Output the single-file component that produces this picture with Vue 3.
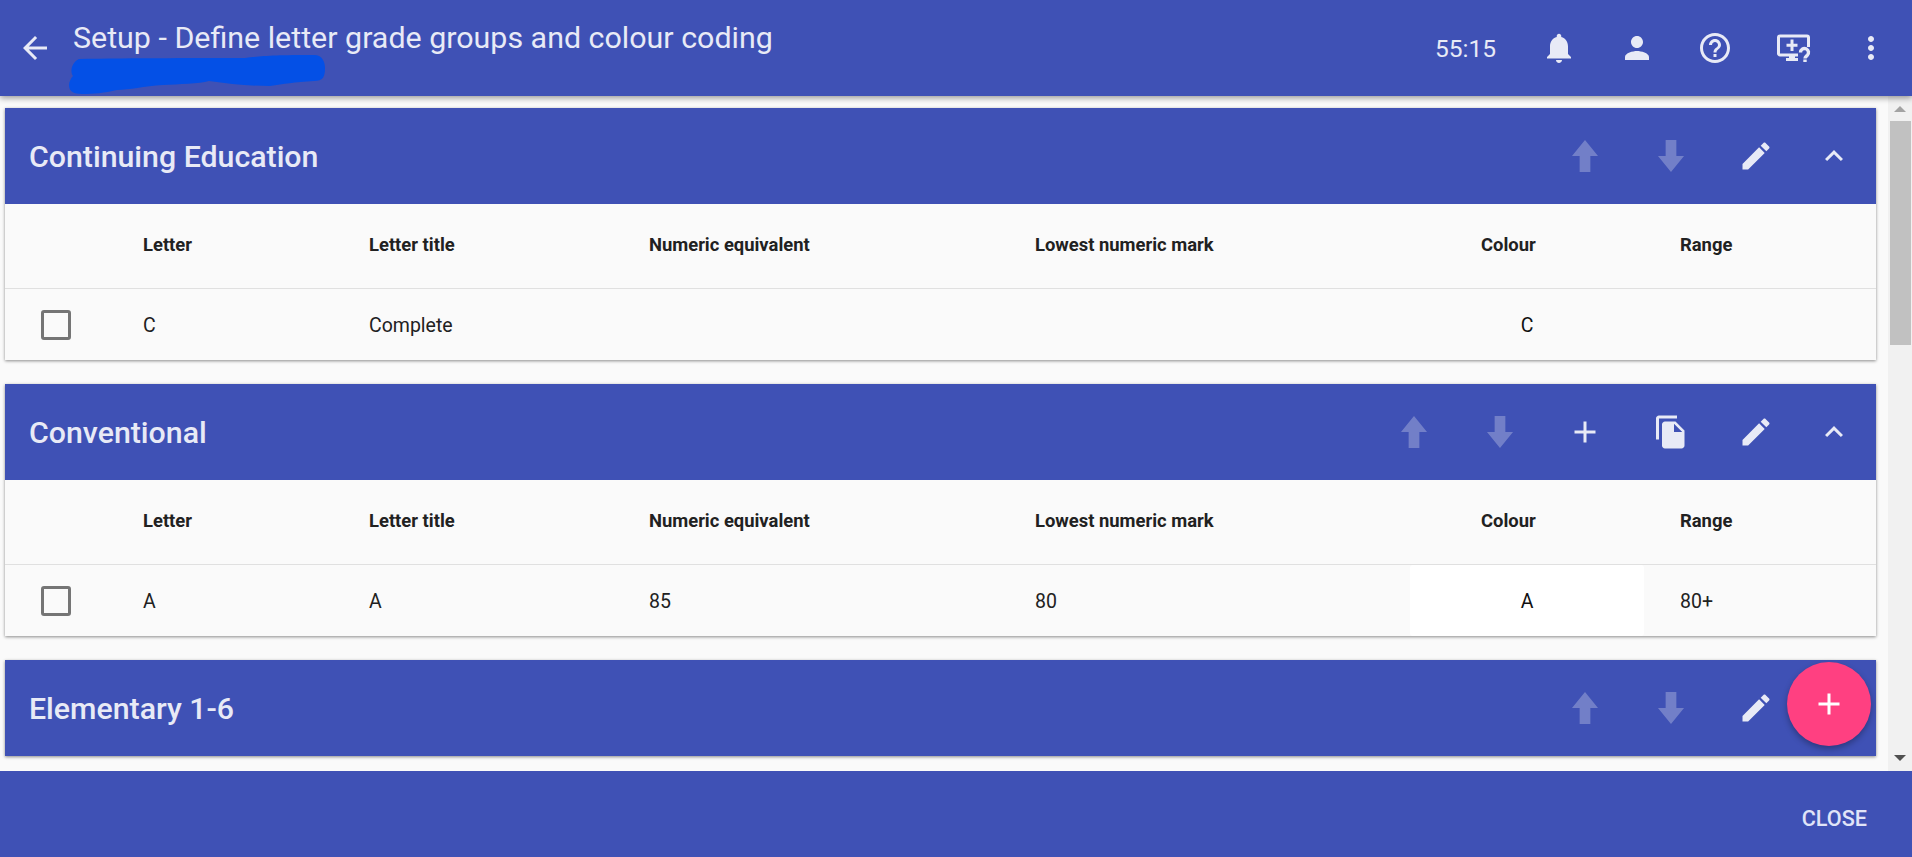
<script setup>
const groups = [
  {
    title: 'Continuing Education',
    actions: ['up', 'down', 'edit', 'less'],
    rows: [{ letter: 'C', name: 'Complete', numeric: '', lowest: '', colour: 'C', bg: '#fafafa', range: '' }],
  },
  {
    title: 'Conventional',
    actions: ['up', 'down', 'add', 'copy', 'edit', 'less'],
    rows: [{ letter: 'A', name: 'A', numeric: '85', lowest: '80', colour: 'A', bg: '#ffffff', range: '80+' }],
  },
  {
    title: 'Elementary 1-6',
    actions: ['up', 'down', 'edit', 'less'],
    rows: [],
  },
]

const icons = {
  add: 'M19 13h-6v6h-2v-6H5v-2h6V5h2v6h6v2z',
  edit: 'M3 17.25V21h3.75L17.81 9.94l-3.75-3.75L3 17.25zM20.71 7.04c.39-.39.39-1.02 0-1.41l-2.34-2.34c-.39-.39-1.02-.39-1.41 0l-1.83 1.83 3.75 3.75 1.83-1.83z',
  less: 'M12 8l-6 6 1.41 1.41L12 10.83l4.59 4.58L18 14z',
  copy: 'M16 1H4c-1.1 0-2 .9-2 2v14h2V3h12V1zm-1 4l6 6v10c0 1.1-.9 2-2 2H7.99C6.89 23 6 22.1 6 21l.01-14c0-1.1.89-2 1.99-2h7zm-1 7h5.5L14 6.5V12z',
  up: 'M12 1.330l8.670 10.670h-5.100V22.670H8.430V12H3.330z',
  down: 'M12 22.670L3.330 12h5.100V1.330h7.140V12h5.100z',
  back: 'M20 11H7.83l5.59-5.59L12 4l-8 8 8 8 1.41-1.41L7.83 13H20v-2z',
  bell: 'M12 22c1.1 0 2-.9 2-2h-4c0 1.1.89 2 2 2zm6-6v-5c0-3.07-1.64-5.64-4.5-6.32V4c0-.83-.67-1.5-1.5-1.5s-1.5.67-1.5 1.5v.68C7.63 5.36 6 7.92 6 11v5l-2 2v1h16v-1l-2-2z',
  person: 'M12 12c2.21 0 4-1.79 4-4s-1.79-4-4-4-4 1.79-4 4 1.79 4 4 4zm0 2c-2.67 0-8 1.34-8 4v2h16v-2c0-2.66-5.33-4-8-4z',
  help: 'M11 18h2v-2h-2v2zm1-16C6.48 2 2 6.48 2 12s4.48 10 10 10 10-4.48 10-10S17.52 2 12 2zm0 18c-4.41 0-8-3.59-8-8s3.59-8 8-8 8 3.59 8 8-3.59 8-8 8zm0-14c-2.21 0-4 1.79-4 4h2c0-1.1.9-2 2-2s2 .9 2 2c0 2-3 1.75-3 5h2c0-2.25 3-2.5 3-5 0-2.21-1.79-4-4-4z',
  more: 'M12 8c1.1 0 2-.9 2-2s-.9-2-2-2-2 .9-2 2 .9 2 2 2zm0 2c-1.1 0-2 .9-2 2s.9 2 2 2 2-.9 2-2-.9-2-2-2zm0 6c-1.1 0-2 .9-2 2s.9 2 2 2 2-.9 2-2-.9-2-2-2z',
}
</script>

<template>
  <div class="page">
    <header class="topbar">
      <svg class="icon back" viewBox="0 0 24 24"><path :d="icons.back" /></svg>
      <div class="heading">
        <div class="title">Setup - Define letter grade groups and colour coding</div>
        <svg class="scribble" viewBox="0 0 256 40">
          <path d="M10 4C60 3 140 3 176 3C190 1 205 0 245 0C254 0 256 8 256 13C256 22 254 26 245 26C225 27 215 29 201 31C180 31 160 29 140 26C130 29 110 29 94 30C75 31 60 35 48 35C35 38 25 39 13 39C4 39 0 36 0 30C0 27 2 23 4 21C1 17 2 8 10 4Z" />
        </svg>
      </div>
      <span class="timer">55:15</span>
      <svg class="icon tool" viewBox="0 0 24 24"><path :d="icons.bell" /></svg>
      <svg class="icon tool" viewBox="0 0 24 24"><path :d="icons.person" /></svg>
      <svg class="icon tool" viewBox="0 0 24 24"><path :d="icons.help" /></svg>
      <svg class="icon tool" viewBox="0 0 36 36">
        <path d="M23 25H5a1.500 1.500 0 0 1-1.500-1.500V7.500A1.500 1.500 0 0 1 5 6h27a1.500 1.500 0 0 1 1.500 1.500V17" class="line" />
        <path d="M17 9.500v11.500M11.500 15.200h11" class="line" />
        <path d="M14 25h6v3h3v3h-12v-3h3z" />
        <path d="M25.500 22.500a4 4 0 1 1 6.800 2.800c-1.300 1.200-2.300 1.800-2.300 3.200M30 29.500v2.500" class="line bold" />
      </svg>
      <svg class="icon tool last" viewBox="0 0 24 24"><path :d="icons.more" /></svg>
    </header>

    <div class="middle">
      <main class="list">
        <section v-for="group in groups" :key="group.title" class="card">
          <div class="card-head">
            <h2>{{ group.title }}</h2>
            <span
              v-for="action in group.actions"
              :key="action"
              class="action"
              :class="{ off: action === 'up' || action === 'down', end: action === 'less' }"
            >
              <svg class="icon" viewBox="0 0 24 24"><path :d="icons[action]" /></svg>
            </span>
          </div>
          <template v-if="group.rows.length">
            <div class="row head">
              <span></span>
              <span>Letter</span>
              <span>Letter title</span>
              <span>Numeric equivalent</span>
              <span>Lowest numeric mark</span>
              <span class="colour-head">Colour</span>
              <span class="range">Range</span>
            </div>
            <div v-for="row in group.rows" :key="row.letter" class="row data">
              <span class="check"><i></i></span>
              <span class="cell">{{ row.letter }}</span>
              <span class="cell">{{ row.name }}</span>
              <span class="cell">{{ row.numeric }}</span>
              <span class="cell">{{ row.lowest }}</span>
              <span class="colour" :style="{ background: row.bg }">{{ row.colour }}</span>
              <span class="cell range">{{ row.range }}</span>
            </div>
          </template>
        </section>
      </main>
      <div class="scrollbar">
        <i class="arrow top"></i>
        <b></b>
        <i class="arrow bottom"></i>
      </div>
      <button class="fab">
        <svg class="icon" viewBox="0 0 24 24"><path :d="icons.add" /></svg>
      </button>
    </div>

    <footer class="bottombar">
      <span>CLOSE</span>
    </footer>
  </div>
</template>

<style>
html, body {
  margin: 0;
  overflow: hidden;
}
</style>

<style scoped>
.page {
  width: 1912px;
  height: 857px;
  display: flex;
  flex-direction: column;
  background: #fafafa;
  font-family: Roboto, sans-serif;
  color: #212121;
}

.icon {
  display: block;
  width: 36px;
  height: 36px;
  fill: currentColor;
  flex: none;
}

.topbar {
  height: 96px;
  flex: none;
  display: flex;
  align-items: center;
  padding-left: 17px;
  background: #3f51b5;
  color: #e8eaf6;
  box-shadow: 0 2px 6px rgba(0, 0, 0, 0.4);
  position: relative;
  z-index: 2;
}

.heading {
  margin-left: 20px;
  flex: 1;
  height: 96px;
  display: flex;
  flex-direction: column;
}

.title {
  font-size: 30.4px;
  line-height: 34px;
  margin-top: 21px;
}

.scribble {
  width: 256px;
  height: 40px;
  margin-left: -4px;
  fill: #0450e6;
}

.timer {
  font-size: 24.5px;
  margin-right: 45px;
}

.tool {
  margin-right: 42px;
}

.tool.last {
  margin-right: 23px;
}

.line {
  fill: none;
  stroke: currentColor;
  stroke-width: 3;
}

.line.bold {
  stroke-width: 3.4;
}

.middle {
  flex: 1;
  min-height: 0;
  display: flex;
  position: relative;
}

.list {
  flex: 1;
  overflow: hidden;
  padding: 12px 12px 0 5px;
}

.card {
  box-shadow: 0 1px 3px rgba(0, 0, 0, 0.45);
  margin-bottom: 24px;
  background: #fafafa;
}

.card-head {
  height: 96px;
  display: flex;
  align-items: center;
  padding: 0 7px 0 24px;
  background: #3f51b5;
  color: #e8eaf6;
}

.card-head h2 {
  flex: 1;
  margin: 0;
  font-size: 30.3px;
  font-weight: 500;
}

.action {
  width: 85.5px;
  display: flex;
  justify-content: center;
}

.action.end {
  width: 70px;
}

.action.off {
  opacity: 0.3;
}

.row {
  display: grid;
  grid-template-columns: 138px 226px 280px 386px 375px 234px 232px;
  align-items: center;
  font-size: 19.5px;
}

.row.head {
  height: 84px;
  font-size: 18.4px;
  font-weight: 700;
  border-bottom: 1px solid #e0e0e0;
}

.row.head span {
  margin-top: -3px;
}

.row.data {
  height: 71px;
}

.cell {
  margin-top: 2px;
}

.check {
  padding-left: 36px;
}

.check i {
  display: block;
  box-sizing: border-box;
  width: 30px;
  height: 30px;
  border: 3px solid #757575;
  border-radius: 3px;
}

.colour-head {
  padding-left: 71px;
}

.colour {
  box-sizing: border-box;
  height: 100%;
  padding-top: 2px;
  display: flex;
  align-items: center;
  justify-content: center;
  border-radius: 3px;
  color: #111;
}

.range {
  padding-left: 36px;
}

.scrollbar {
  width: 24px;
  flex: none;
  background: #f1f1f1;
  display: flex;
  flex-direction: column;
  align-items: center;
  position: relative;
}

.scrollbar b {
  width: 21px;
  height: 224px;
  margin-top: 25px;
  background: #c1c1c1;
}

.arrow {
  position: absolute;
  width: 0;
  height: 0;
  border-left: 6px solid transparent;
  border-right: 6px solid transparent;
}

.arrow.top {
  top: 10px;
  border-bottom: 6px solid #a3a3a3;
}

.arrow.bottom {
  bottom: 10px;
  border-top: 6px solid #505050;
}

.fab {
  position: absolute;
  left: 1787px;
  top: 566px;
  width: 84px;
  height: 84px;
  padding: 0;
  border: none;
  border-radius: 50%;
  display: flex;
  align-items: center;
  justify-content: center;
  background: #ff4081;
  color: #fff;
  box-shadow: 0 3px 6px rgba(0, 0, 0, 0.3);
}

.bottombar {
  height: 78px;
  flex: none;
  display: flex;
  align-items: center;
  justify-content: flex-end;
  padding: 8px 45px 0 0;
  background: #3f51b5;
  color: #e0e4f8;
  font-size: 21.6px;
  font-weight: 500;
}
</style>
